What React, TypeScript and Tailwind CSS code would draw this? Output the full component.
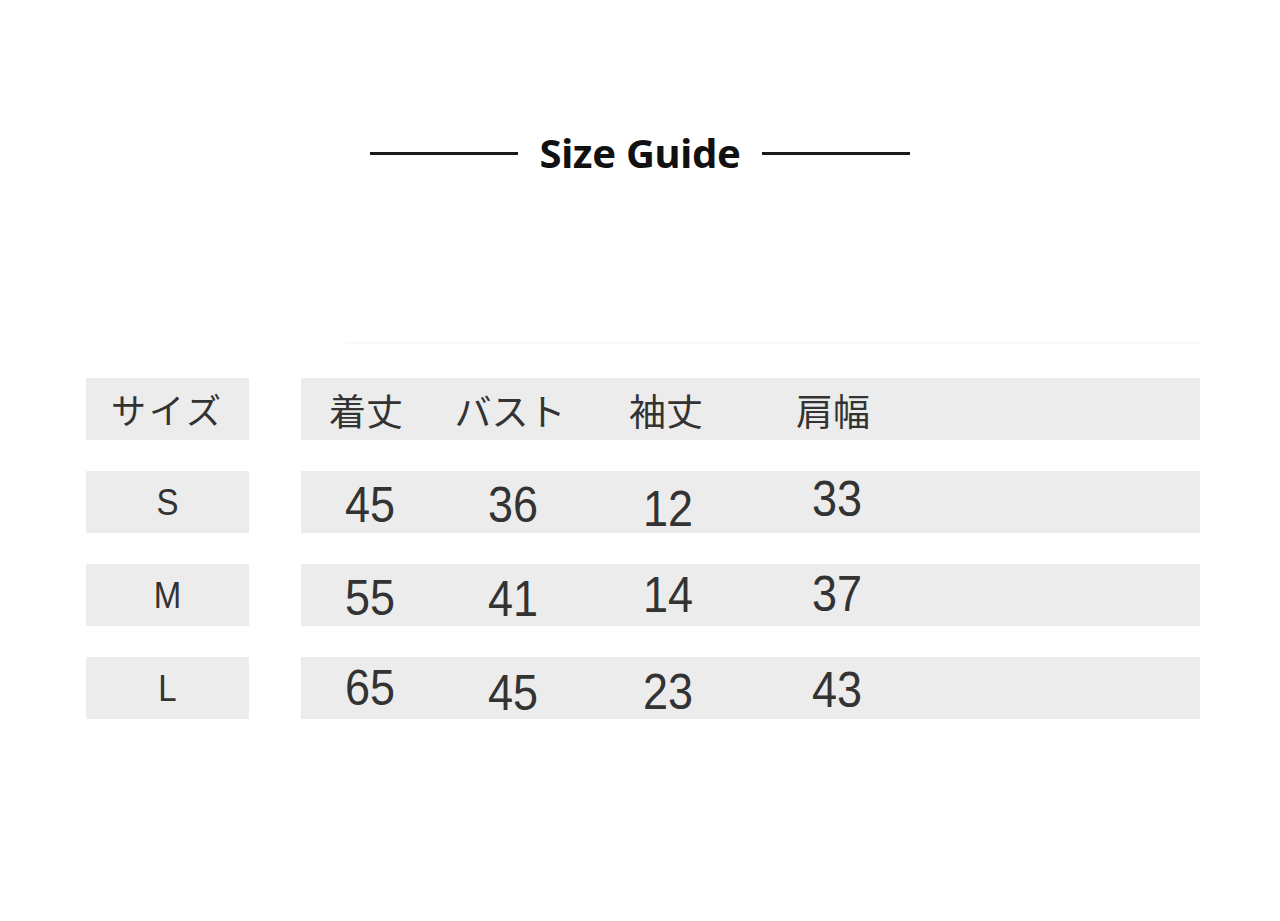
const headers = [
  { label: '着丈', shift: '-translate-x-[4px]' },
  { label: 'バスト', shift: '-translate-x-[3px]' },
  { label: '袖丈', shift: '-translate-x-[2px]' },
  { label: '肩幅', shift: '-translate-x-[4px]' },
];

// small vertical offsets copied from the printed chart
const rows = [
  {
    size: 'S',
    cells: [
      { v: '45', y: 'translate-y-[2px]' },
      { v: '36', y: 'translate-y-[2px]' },
      { v: '12', y: 'translate-y-[6px]' },
      { v: '33', y: '-translate-y-[4px]' },
    ],
  },
  {
    size: 'M',
    cells: [
      { v: '55', y: 'translate-y-[2px]' },
      { v: '41', y: 'translate-y-[3px]' },
      { v: '14', y: '-translate-y-[1px]' },
      { v: '37', y: '-translate-y-[2px]' },
    ],
  },
  {
    size: 'L',
    cells: [
      { v: '65', y: '-translate-y-[1px]' },
      { v: '45', y: 'translate-y-[4px]' },
      { v: '23', y: 'translate-y-[3px]' },
      { v: '43', y: 'translate-y-[1px]' },
    ],
  },
];

const cols = 'grid grid-cols-[138px_148px_162px_176px] h-full items-center';

export default function App() {
  return (
    <div className="w-full h-[921px] bg-white flex flex-col text-[#333]">
      {/* Title */}
      <div className="mt-[133px] h-[40px] flex items-center justify-center gap-[21px]">
        <div className="w-[148px] h-[3px] bg-[#1a1a1a]" />
        <h1 className="text-[40px] leading-none font-bold text-[#111] font-['Noto_Sans',sans-serif] tracking-[-0.3px]">
          Size Guide
        </h1>
        <div className="w-[148px] h-[3px] bg-[#1a1a1a]" />
      </div>

      <div className="mt-[169px] ml-[345px] w-[855px] h-[2px] bg-[#f8f8f8]" />

      {/* Table */}
      <div className="mt-[34px] flex flex-col gap-[31px]">
        <div className="flex gap-[52px] ml-[86px] h-[62px]">
          <div className="w-[163px] bg-[#ececec] flex items-center justify-center text-[35px] tracking-[3px] font-['Noto_Sans_CJK_JP',sans-serif]">
            サイズ
          </div>
          <div className="w-[899px] bg-[#ececec]">
            <div className={cols}>
              {headers.map((h) => (
                <span
                  key={h.label}
                  className={`text-center text-[37px] font-['Noto_Sans_CJK_JP',sans-serif] translate-y-[2px] ${h.shift}`}
                >
                  {h.label}
                </span>
              ))}
            </div>
          </div>
        </div>

        {rows.map((r) => (
          <div key={r.size} className="flex gap-[52px] ml-[86px] h-[62px]">
            <div className="w-[163px] bg-[#ececec] flex items-center justify-center">
              <span className="text-[33px] leading-none scale-y-[1.1] font-['Liberation_Sans',sans-serif]">
                {r.size}
              </span>
            </div>
            <div className="w-[899px] bg-[#ececec]">
              <div className={cols}>
                {r.cells.map((c, i) => (
                  <div key={i} className={`flex justify-center ${c.y}`}>
                    <span className="text-[45px] leading-none scale-y-[1.12] font-['Liberation_Sans',sans-serif]">
                      {c.v}
                    </span>
                  </div>
                ))}
              </div>
            </div>
          </div>
        ))}
      </div>
    </div>
  );
}
